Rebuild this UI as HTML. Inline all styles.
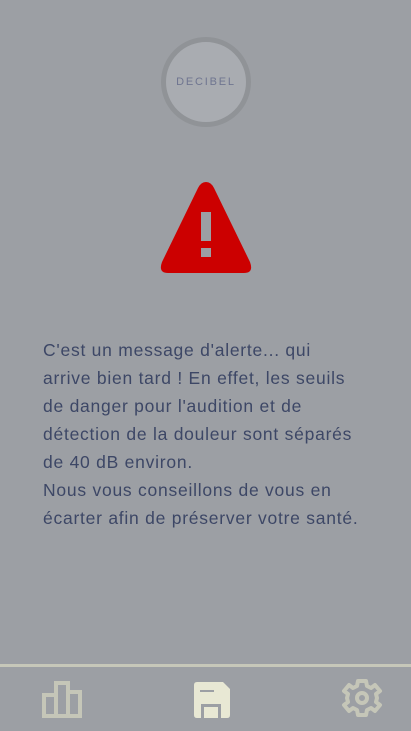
<!DOCTYPE html>
<html><head><meta charset="utf-8"><style>
html,body{margin:0;padding:0;width:411px;height:731px;overflow:hidden;background:#9c9fa4;font-family:"Liberation Sans",sans-serif;}
.logo{position:absolute;left:161px;top:37px;width:80px;height:80px;border-radius:50%;border:5px solid #909397;background:#a9acb1;}
.logo span{position:absolute;left:0;right:0;top:34px;text-align:center;font-size:11px;letter-spacing:1.8px;color:#6f7590;}
.txt{position:absolute;left:43px;top:336px;font-size:17.5px;line-height:28px;color:#3d4766;white-space:nowrap;letter-spacing:0.75px;}
.line{position:absolute;left:0;top:664px;width:411px;height:3px;background:#c6c7b9;}
</style></head><body>
<div class="logo"><span>DECIBEL</span></div>
<svg style="position:absolute;left:0;top:0" width="411" height="731">
<path d="M206 182 Q201 182 198 188 L162 262 Q158 273 168 273 L244 273 Q254 273 250 262 L214 188 Q211 182 206 182Z" fill="#cc0000"/>
<rect x="201" y="212" width="10" height="29" fill="#9c9fa4"/>
<rect x="201" y="248" width="10" height="9" fill="#9c9fa4"/>
<g fill="none" stroke="#c5c6b8" stroke-width="4">
<rect x="44" y="695" width="12" height="21"/><rect x="56" y="683" width="12" height="33"/><rect x="68" y="692" width="12" height="24"/>
</g>
<path d="M197 682 L223 682 L230 689 L230 715 Q230 718 227 718 L197 718 Q194 718 194 715 L194 685 Q194 682 197 682Z" fill="#e8e8d4"/>
<rect x="200" y="690" width="14" height="2" fill="#9c9fa4"/>
<rect x="201" y="704" width="20" height="14" fill="#9c9fa4"/>
<rect x="204" y="707" width="14" height="11" fill="#e8e8d4"/>
<g transform="translate(362,698)" fill="none" stroke="#c5c6b8" stroke-width="4" stroke-linejoin="round">
<path d="M-4 -17 L4 -17 L5 -12 L9 -10 L13 -13 L18 -7 L14 -4 L15 0 L14 4 L18 7 L13 13 L9 10 L5 12 L4 17 L-4 17 L-5 12 L-9 10 L-13 13 L-18 7 L-14 4 L-15 0 L-14 -4 L-18 -7 L-13 -13 L-9 -10 L-5 -12Z"/>
<circle r="5"/>
</g>
</svg>
<div class="txt">C'est un message d'alerte... qui<br>arrive bien tard ! En effet, les seuils<br>de danger pour l'audition et de<br>détection de la douleur sont séparés<br>de 40 dB environ.<br>Nous vous conseillons de vous en<br>écarter afin de préserver votre santé.</div>
<div class="line"></div>
</body></html>
